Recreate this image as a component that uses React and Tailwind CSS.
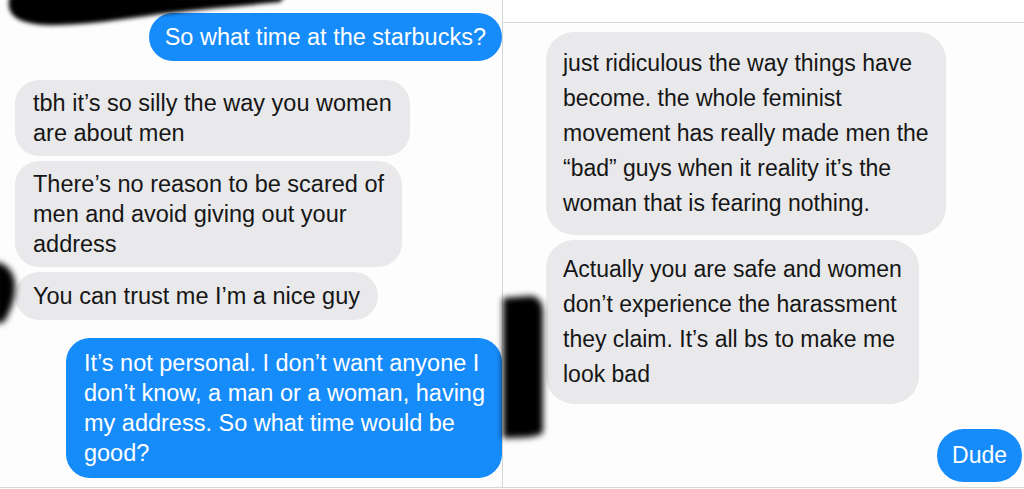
import React from "react";

function Gray({ children, className = "" }) {
  return (
    <div
      className={
        "self-start whitespace-nowrap bg-[#e9e9eb] text-[#161616] rounded-[24px] " +
        className
      }
    >
      {children}
    </div>
  );
}

function Blue({ children, className = "" }) {
  return (
    <div
      className={
        "self-end whitespace-nowrap bg-[#168bfa] text-white rounded-[24px] " +
        className
      }
    >
      {children}
    </div>
  );
}

export default function App() {
  return (
    <div className="relative w-[1024px] h-[489px] overflow-hidden bg-white flex font-['Liberation_Sans',Arial,sans-serif]">
      {/* Left screenshot */}
      <div className="w-[503px] h-[488px] shrink-0 bg-[#fdfdfd] border-r border-b border-[#d6d6d6] flex flex-col pt-[13px] text-[23.5px] leading-[30px]">
        <Blue className="px-[16px] py-[9px]">So what time at the starbucks?</Blue>
        <Gray className="ml-[15px] mt-[19px] px-[18px] py-[8px]">
          tbh it’s so silly the way you women
          <br />
          are about men
        </Gray>
        <Gray className="ml-[15px] mt-[5px] px-[18px] py-[8px]">
          There’s no reason to be scared of
          <br />
          men and avoid giving out your
          <br />
          address
        </Gray>
        <Gray className="ml-[15px] mt-[5px] px-[18px] py-[9px]">
          You can trust me I’m a nice guy
        </Gray>
        <Blue className="mt-[18px] pl-[18px] pr-[17px] py-[10px]">
          It’s not personal. I don’t want anyone I
          <br />
          don’t know, a man or a woman, having
          <br />
          my address. So what time would be
          <br />
          good?
        </Blue>
      </div>

      {/* Right screenshot */}
      <div className="flex-1 mt-[22px] h-[466px] bg-[#fdfdfd] border-t border-b border-[#d6d6d6] flex flex-col pt-[9px] text-[23px] leading-[35px]">
        <Gray className="ml-[43px] px-[17px] py-[14px] rounded-[28px]">
          just ridiculous the way things have
          <br />
          become. the whole feminist
          <br />
          movement has really made men the
          <br />
          “bad” guys when it reality it’s the
          <br />
          woman that is fearing nothing.
        </Gray>
        <Gray className="ml-[43px] mt-[5px] px-[17px] py-[12px] rounded-[28px]">
          Actually you are safe and women
          <br />
          don’t experience the harassment
          <br />
          they claim. It’s all bs to make me
          <br />
          look bad
        </Gray>
        <Blue className="mt-[25px] mr-[2px] px-[15px] py-[9px] rounded-[27px]">
          Dude
        </Blue>
      </div>

      {/* Redaction scribbles (overlays) */}
      <svg
        className="absolute left-0 top-0 pointer-events-none"
        width="1024"
        height="489"
        viewBox="0 0 1024 489"
      >
        <defs>
          <filter id="b1" x="-20%" y="-50%" width="140%" height="200%">
            <feGaussianBlur stdDeviation="2.2" />
          </filter>
          <filter id="b2" x="-50%" y="-20%" width="200%" height="140%">
            <feGaussianBlur stdDeviation="3" />
          </filter>
        </defs>
        <path
          d="M10 -4 L285 -4 L280 2 C240 6 200 9 160 14 C120 20 90 24 60 25 C35 26 18 22 12 14 C8 8 8 2 10 -4 Z"
          fill="#000"
          filter="url(#b1)"
        />
        <path
          d="M-6 262 C4 262 14 270 15 284 C16 298 10 312 4 322 L-6 324 Z"
          fill="#000"
          filter="url(#b2)"
        />
        <path
          d="M503 298 L530 296 C538 296 543 302 543 312 L543 432 C540 437 525 438 503 438 Z"
          fill="#000"
          filter="url(#b2)"
        />
      </svg>
    </div>
  );
}
